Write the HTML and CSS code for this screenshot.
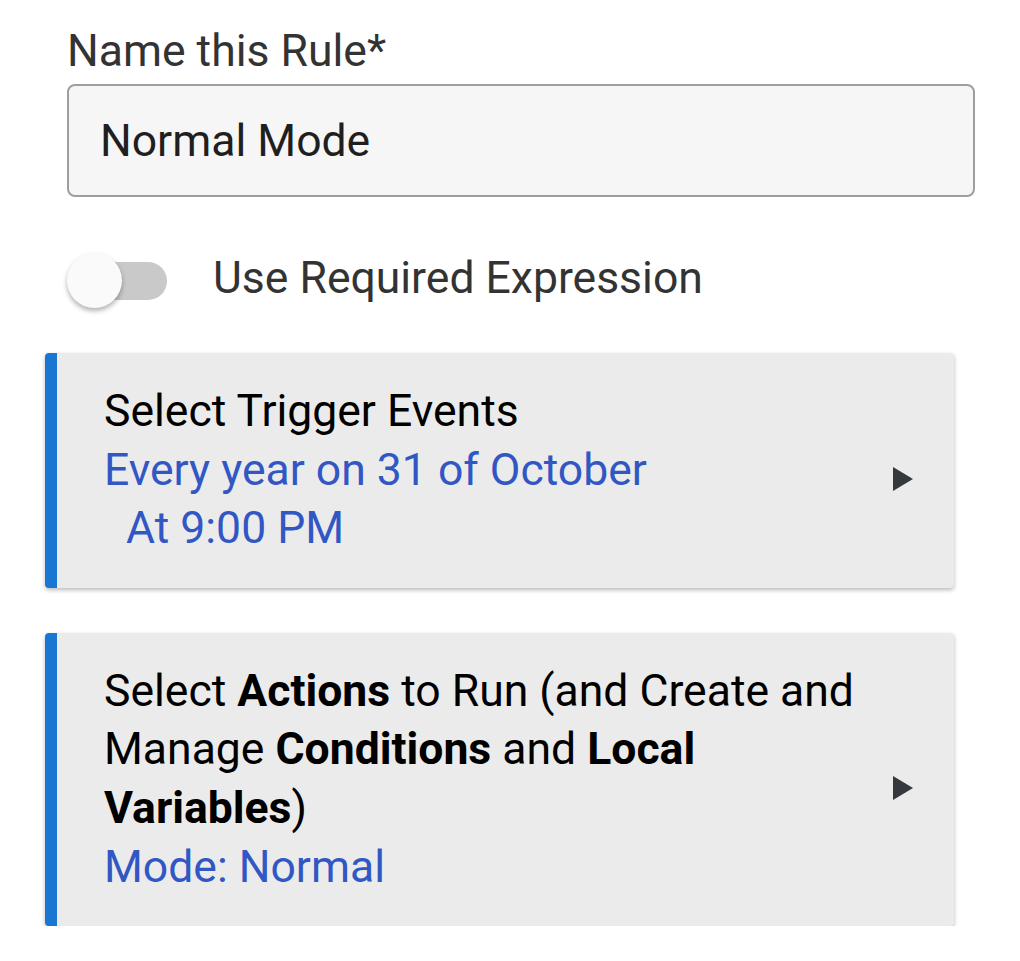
FILE: index.html
```html
<!DOCTYPE html>
<html>
<head>
<meta charset="utf-8">
<link rel="stylesheet" href="styles.css">
</head>
<body>
<div class="page">
  <div class="field">
    <label class="field-label">Name this Rule*</label>
    <div class="field-input">Normal Mode</div>
  </div>
  <div class="toggle-row">
    <div class="switch"><span class="switch-track"></span><span class="switch-knob"></span></div>
    <span class="toggle-label">Use Required Expression</span>
  </div>
  <div class="card">
    <div class="card-body">
      <div class="card-title">Select Trigger Events</div>
      <div class="card-sub">Every year on 31 of October</div>
      <div class="card-sub">&nbsp;&nbsp;At 9:00 PM</div>
    </div>
    <svg class="arrow" width="20" height="24" viewBox="0 0 20 24"><path d="M0 0 L20 12 L0 24 Z" fill="#35383d"/></svg>
  </div>
  <div class="card">
    <div class="card-body">
      <div class="card-title">Select <b>Actions</b> to Run (and Create and Manage <b>Conditions</b> and <b>Local Variables</b>)</div>
      <div class="card-sub">Mode: Normal</div>
    </div>
    <svg class="arrow" width="20" height="24" viewBox="0 0 20 24"><path d="M0 0 L20 12 L0 24 Z" fill="#35383d"/></svg>
  </div>
</div>
</body>
</html>
```
FILE: styles.css
```css
html, body {
  margin: 0;
  padding: 0;
  background: #ffffff;
}
body {
  font-family: Roboto, "Liberation Sans", sans-serif;
  font-size: 44.5px;
  color: #222;
}
.page {
  padding-top: 25px;
  display: flex;
  flex-direction: column;
}
.field {
  margin: 0 45px 0 67px;
  display: flex;
  flex-direction: column;
  gap: 7px;
}
.field-label {
  line-height: 52px;
  color: #333;
}
.field-input {
  box-sizing: border-box;
  height: 113px;
  border: 2px solid #9e9e9e;
  border-radius: 8px;
  background: #f6f6f6;
  padding-left: 31px;
  display: flex;
  align-items: center;
  color: #1f1f1f;
}
.toggle-row {
  margin: 56px 0 0 67px;
  display: flex;
  align-items: center;
  gap: 46px;
  height: 56px;
}
.switch {
  position: relative;
  width: 100px;
  height: 56px;
}
.switch-track {
  position: absolute;
  left: 13px;
  top: 9px;
  width: 87px;
  height: 38px;
  border-radius: 19px;
  background: #c9c9c9;
}
.switch-knob {
  position: absolute;
  left: 0;
  top: 0;
  width: 55px;
  height: 55px;
  border-radius: 50%;
  background: #fafafa;
  box-shadow: 0 3px 5px rgba(0,0,0,0.3);
}
.toggle-label {
  color: #333;
  line-height: 52px;
  margin-top: -7px;
}
.card {
  margin: 44px 66px 0 45px;
  background: #ebebeb;
  border-left: 12px solid #1976d2;
  border-radius: 4px;
  box-shadow: 0 2px 4px rgba(0,0,0,0.28);
  padding: 29px 41px 30px 47px;
  display: flex;
  align-items: center;
  gap: 20px;
}
.card + .card {
  margin-top: 45px;
}
.card-body {
  flex: 1;
  line-height: 58.6px;
}
.card-title {
  color: #000;
}
.card-sub {
  color: #3157c4;
}
.arrow {
  flex: none;
  margin-top: 18px;
}
```
